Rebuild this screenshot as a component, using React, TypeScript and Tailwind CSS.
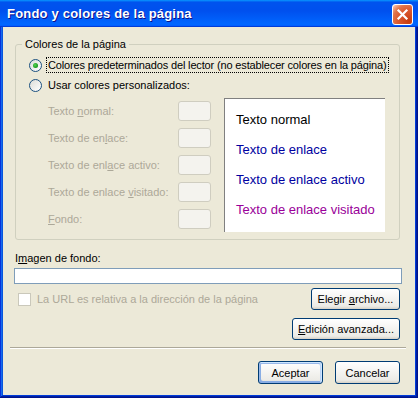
import React from "react";

function XPButton({
  children,
  w,
  isDefault = false,
  h = "h-[22px]",
}: {
  children: React.ReactNode;
  w: string;
  isDefault?: boolean;
  h?: string;
}) {
  return (
    <button
      className={
        `${w} ${h} flex items-center justify-center whitespace-nowrap rounded-[3px] border border-[#003c74] bg-[linear-gradient(180deg,#ffffff,#ecebe6_86%,#d6d0c5)] text-[11px] text-black ` +
        (isDefault
          ? "shadow-[inset_-1px_1px_#cee7ff,inset_1px_2px_#98b8ea,inset_-2px_2px_#bcd4f6,inset_1px_-1px_#89ade4,inset_2px_-2px_#89ade4]"
          : "")
      }
    >
      <span>{children}</span>
    </button>
  );
}

function Radio({ checked }: { checked?: boolean }) {
  return (
    <span className="flex h-[13px] w-[13px] shrink-0 items-center justify-center rounded-full border border-[#1c5180] bg-[linear-gradient(135deg,#dcdcd7,#ffffff)]">
      {checked && (
        <span className="h-[5px] w-[5px] rounded-full bg-[radial-gradient(circle_at_40%_40%,#55d355,#21a121_60%,#0d7a0d)]" />
      )}
    </span>
  );
}

function Swatch() {
  return (
    <span className="h-[20px] w-[33px] shrink-0 rounded-[3px] border border-[#cfcdc0] bg-[#f4f3ee]" />
  );
}

export default function App() {
  const rows: React.ReactNode[] = [
    <>
      Texto <u>n</u>ormal:
    </>,
    <>
      Texto de en<u>l</u>ace:
    </>,
    <>
      Texto de enl<u>a</u>ce activo:
    </>,
    <>
      Texto de enlace <u>v</u>isitado:
    </>,
    <>
      <u>F</u>ondo:
    </>,
  ];

  return (
    <div className="flex h-[398px] w-[418px] flex-col bg-[#0831d9] px-[3px] pb-[3px] font-['Liberation_Sans',Arial,sans-serif] text-[11px] leading-[14px] text-black shadow-[inset_-1px_-1px_#00138c,inset_1px_1px_#0831d9,inset_-2px_-2px_#001ea0,inset_2px_2px_#166aee,inset_-3px_-3px_#003bda,inset_3px_3px_#0855dd]">
      {/* Title bar */}
      <div className="-mx-[3px] flex h-[27px] shrink-0 items-center justify-between bg-[linear-gradient(180deg,#0997ff,#0053ee_8%,#0050ee_40%,#0066ff_88%,#0066ff_93%,#005bff_95%,#003dd7_96%,#003dd7)] pl-[7px] pr-[5px] pt-[1px]">
        <span className="text-[13px] font-bold tracking-[0.2px] text-white [text-shadow:1px_1px_#0f1089]">
          Fondo y colores de la página
        </span>
        <span className="flex h-[21px] w-[21px] items-center justify-center rounded-[3px] border border-white bg-[radial-gradient(circle_at_85%_85%,#c63c10_0%,#dc5a30_50%,#e0744a_72%,#f7b49a_92%,#ffffff_100%)]">
          <svg width="13" height="13" viewBox="0 0 13 13">
            <path
              d="M2.5 2.5 L10.5 10.5 M10.5 2.5 L2.5 10.5"
              stroke="white"
              strokeWidth="2.2"
              strokeLinecap="square"
            />
          </svg>
        </span>
      </div>

      {/* Body */}
      <div className="flex flex-1 flex-col bg-[#ece9d8] pl-[11px] pr-[13px] pt-[10px]">
        <fieldset className="ml-[1px] mr-[2px] rounded-[3px] border border-[#d0d0bf] p-0">
          <legend className="ml-[6px] px-[3px] leading-[14px]">
            Colores de la página
          </legend>
          <div className="mt-[6px] flex h-[16px] items-center whitespace-nowrap pl-[13px]">
            <Radio checked />
            <span className="ml-[4px] border border-dotted border-black px-[1px] leading-[14px] tracking-[-0.15px]">
              Colores predeterminados del lector (no establecer colores en la página)
            </span>
          </div>
          <div className="mt-[4px] flex h-[16px] items-center pl-[13px]">
            <Radio />
            <span className="ml-[6px]">Usar colores personalizados:</span>
          </div>
          <div className="mt-[5px] flex pb-[7px] pl-[32px]">
            <div className="mt-[3px] flex flex-col gap-[7px]">
              {rows.map((r, i) => (
                <div key={i} className="flex h-[20px] items-center">
                  <span className="w-[130px] whitespace-nowrap text-[#aca899]">{r}</span>
                  <Swatch />
                </div>
              ))}
            </div>
            <div className="ml-[13px] h-[134px] w-[161px] border-l border-t border-[#808080] bg-white pl-[11px] pt-[6px] text-[13px] leading-[30px]">
              <div className="text-black">Texto normal</div>
              <div className="text-[#0000a0]">Texto de enlace</div>
              <div className="text-[#0000a0]">Texto de enlace activo</div>
              <div className="text-[#990099]">Texto de enlace visitado</div>
            </div>
          </div>
        </fieldset>

        <div className="mt-[11px] pl-[1px]">
          I<u>m</u>agen de fondo:
        </div>
        <div className="mt-[3px] h-[16px] border border-[#7f9db9] bg-white" />

        <div className="mt-[4px] flex items-center justify-between pr-[2px]">
          <div className="flex items-center pl-[4px]">
            <span className="h-[13px] w-[13px] border border-[#cac8bb] bg-white" />
            <span className="ml-[6px] text-[#aca899]">
              La URL es relativa a la dirección de la página
            </span>
          </div>
          <XPButton w="w-[89px]">
            Elegir <u>a</u>rchivo...
          </XPButton>
        </div>

        <div className="mt-[8px] flex justify-end pr-[2px]">
          <XPButton w="w-[108px]">
            <u>E</u>dición avanzada...
          </XPButton>
        </div>

        <div className="-ml-[4px] -mr-[4px] mt-[7px] border-b border-t border-b-white border-t-[#aca899]" />

        <div className="mt-[12px] flex justify-end gap-[12px] pr-[2px]">
          <XPButton w="w-[65px]" h="h-[23px]" isDefault>
            Aceptar
          </XPButton>
          <XPButton w="w-[65px]" h="h-[23px]">
            Cancelar
          </XPButton>
        </div>
      </div>
    </div>
  );
}
